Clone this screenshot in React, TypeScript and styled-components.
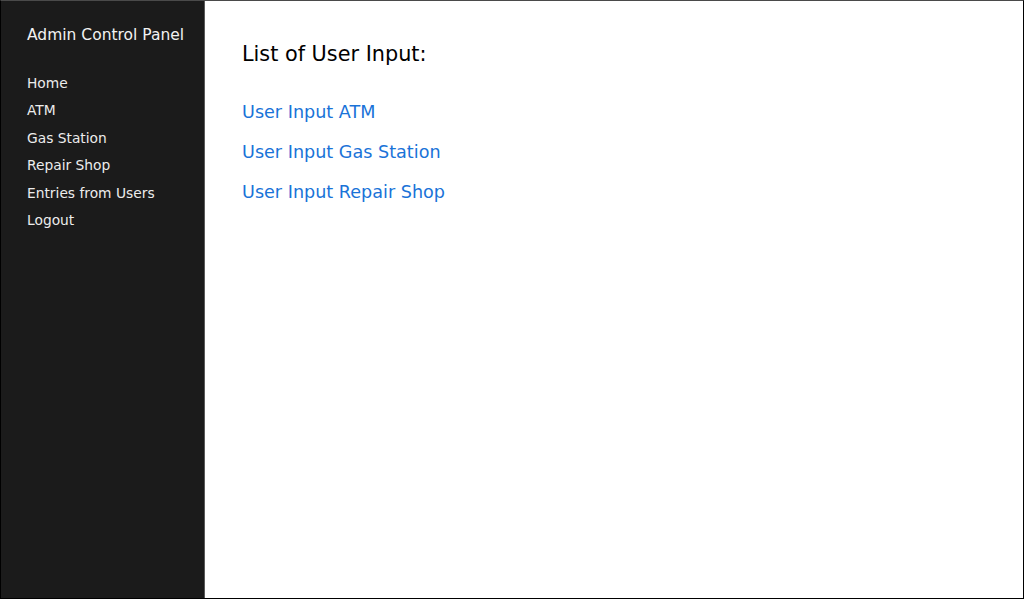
import styled, { createGlobalStyle } from "styled-components";

const GlobalStyle = createGlobalStyle`
  html, body {
    margin: 0;
    padding: 0;
    background: #fff;
  }
  * {
    box-sizing: border-box;
  }
`;

const navItems = [
  "Home",
  "ATM",
  "Gas Station",
  "Repair Shop",
  "Entries from Users",
  "Logout",
];

const inputLinks = [
  "User Input ATM",
  "User Input Gas Station",
  "User Input Repair Shop",
];

export default function App() {
  return (
    <>
      <GlobalStyle />
      <Frame>
        <Sidebar>
          <Brand>Admin Control Panel</Brand>
          <NavList>
            {navItems.map((item) => (
              <NavLink key={item} href="#">
                {item}
              </NavLink>
            ))}
          </NavList>
        </Sidebar>
        <Main>
          <Heading>List of User Input:</Heading>
          <LinkList>
            {inputLinks.map((item) => (
              <InputLink key={item} href="#">
                {item}
              </InputLink>
            ))}
          </LinkList>
        </Main>
      </Frame>
    </>
  );
}

const Frame = styled.div`
  display: flex;
  width: 1024px;
  height: 599px;
  border: 1px solid #000;
  border-top-color: #4a4a4a;
  font-family: "DejaVu Sans", "Liberation Sans", sans-serif;
`;

const Sidebar = styled.aside`
  width: 204px;
  flex-shrink: 0;
  background: #1b1b1b;
  border-right: 1px solid #5a5a5a;
  padding: 25px 0 0 26px;
  display: flex;
  flex-direction: column;
`;

const Brand = styled.div`
  color: #f2f2f2;
  font-size: 15.5px;
  line-height: 18px;
  white-space: nowrap;
`;

const NavList = styled.nav`
  display: flex;
  flex-direction: column;
  margin-top: 26px;
`;

const NavLink = styled.a`
  color: #ececec;
  font-size: 13.8px;
  line-height: 27.4px;
  text-decoration: none;
  white-space: nowrap;
`;

const Main = styled.main`
  flex: 1;
  background: #fff;
  padding: 40px 0 0 37px;
`;

const Heading = styled.h2`
  margin: 0;
  color: #000;
  font-size: 20.8px;
  font-weight: 400;
  line-height: 26px;
`;

const LinkList = styled.div`
  display: flex;
  flex-direction: column;
  gap: 19px;
  margin-top: 35px;
`;

const InputLink = styled.a`
  color: #1a73d8;
  font-size: 17.6px;
  line-height: 21px;
  text-decoration: none;
  white-space: nowrap;
`;
